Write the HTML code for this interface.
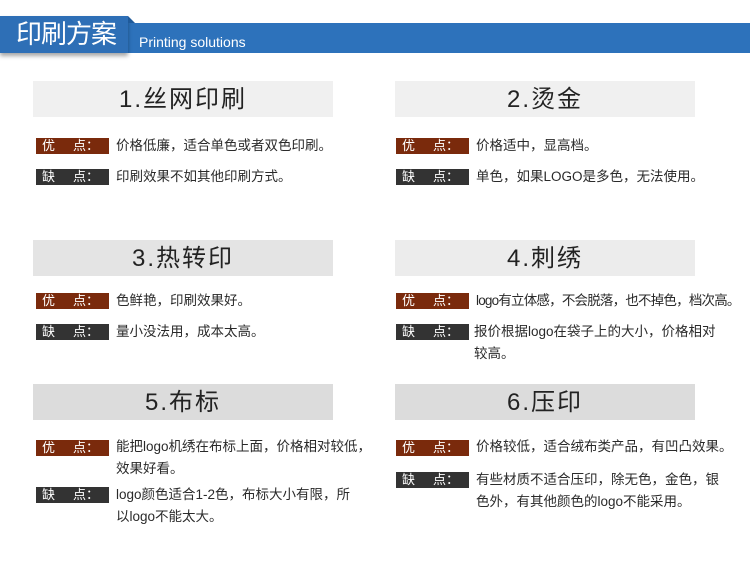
<!DOCTYPE html>
<html><head><meta charset="utf-8"><style>
body{margin:0;width:750px;height:566px;background:#fff;position:relative;overflow:hidden;font-family:"Liberation Sans","Noto Sans CJK SC",sans-serif;}
.a{position:absolute}
.band{left:128px;top:23px;width:622px;height:30px;background:#2d72bb}
.lb{left:0;top:16px;width:128px;height:37px;background:#2e6fb6;box-shadow:0 3px 4px rgba(0,0,0,.35);color:#fff;font-size:26px;line-height:37px;padding-left:16px;box-sizing:border-box;letter-spacing:-1px}
.tri{left:128px;top:16px;width:0;height:0;border-left:7px solid #1f5a9a;border-top:7px solid transparent}
.en{left:139px;top:33px;color:#fff;font-size:14px;line-height:18px}
.t{width:300px;height:36px;background:#f0f0f0;font-size:24px;line-height:38px;color:#222;text-align:center;letter-spacing:2px}
.d{background:#dcdcdc}
.l{width:73px;height:16px;color:#fff;font-size:13px;line-height:16px;padding-left:6px;box-sizing:border-box;word-spacing:0}
.g{background:#7a2a0c}.k{background:#333}
.x{font-size:13.5px;color:#2a2a2a;line-height:22px;width:260px}
</style></head><body>
<div class="a band"></div>
<div class="a lb">印刷方案</div>
<div class="a tri"></div>
<div class="a en">Printing solutions</div>

<div class="a t" style="left:33px;top:81px">1.丝网印刷</div>
<div class="a t" style="left:395px;top:81px">2.烫金</div>
<div class="a t d" style="left:33px;top:240px;background:#e4e4e4">3.热转印</div>
<div class="a t" style="left:395px;top:240px;background:#ececec">4.刺绣</div>
<div class="a t d" style="left:33px;top:384px">5.布标</div>
<div class="a t d" style="left:395px;top:384px">6.压印</div>

<div class="a l g" style="left:36px;top:138px">优&nbsp;&nbsp;&nbsp;&nbsp;&nbsp;点：</div>
<div class="a x" style="left:116px;top:135px">价格低廉，适合单色或者双色印刷。</div>
<div class="a l k" style="left:36px;top:169px">缺&nbsp;&nbsp;&nbsp;&nbsp;&nbsp;点：</div>
<div class="a x" style="left:116px;top:166px">印刷效果不如其他印刷方式。</div>

<div class="a l g" style="left:396px;top:138px">优&nbsp;&nbsp;&nbsp;&nbsp;&nbsp;点：</div>
<div class="a x" style="left:476px;top:135px">价格适中，显高档。</div>
<div class="a l k" style="left:396px;top:169px">缺&nbsp;&nbsp;&nbsp;&nbsp;&nbsp;点：</div>
<div class="a x" style="left:476px;top:166px">单色，如果LOGO是多色，无法使用。</div>

<div class="a l g" style="left:36px;top:293px">优&nbsp;&nbsp;&nbsp;&nbsp;&nbsp;点：</div>
<div class="a x" style="left:116px;top:290px">色鲜艳，印刷效果好。</div>
<div class="a l k" style="left:36px;top:324px">缺&nbsp;&nbsp;&nbsp;&nbsp;&nbsp;点：</div>
<div class="a x" style="left:116px;top:321px">量小没法用，成本太高。</div>

<div class="a l g" style="left:396px;top:293px">优&nbsp;&nbsp;&nbsp;&nbsp;&nbsp;点：</div>
<div class="a x" style="left:476px;top:290px;letter-spacing:-0.8px;width:270px">logo有立体感，不会脱落，也不掉色，档次高。</div>
<div class="a l k" style="left:396px;top:324px">缺&nbsp;&nbsp;&nbsp;&nbsp;&nbsp;点：</div>
<div class="a x" style="left:474px;top:321px;width:260px">报价根据logo在袋子上的大小，价格相对<br>较高。</div>

<div class="a l g" style="left:36px;top:440px">优&nbsp;&nbsp;&nbsp;&nbsp;&nbsp;点：</div>
<div class="a x" style="left:116px;top:436px;width:270px">能把logo机绣在布标上面，价格相对较低，<br>效果好看。</div>
<div class="a l k" style="left:36px;top:487px">缺&nbsp;&nbsp;&nbsp;&nbsp;&nbsp;点：</div>
<div class="a x" style="left:116px;top:484px;width:270px">logo颜色适合1-2色，布标大小有限，所<br>以logo不能太大。</div>

<div class="a l g" style="left:396px;top:440px">优&nbsp;&nbsp;&nbsp;&nbsp;&nbsp;点：</div>
<div class="a x" style="left:476px;top:436px;width:274px">价格较低，适合绒布类产品，有凹凸效果。</div>
<div class="a l k" style="left:396px;top:472px">缺&nbsp;&nbsp;&nbsp;&nbsp;&nbsp;点：</div>
<div class="a x" style="left:476px;top:469px;width:260px">有些材质不适合压印，除无色，金色，银<br>色外，有其他颜色的logo不能采用。</div>
</body></html>
